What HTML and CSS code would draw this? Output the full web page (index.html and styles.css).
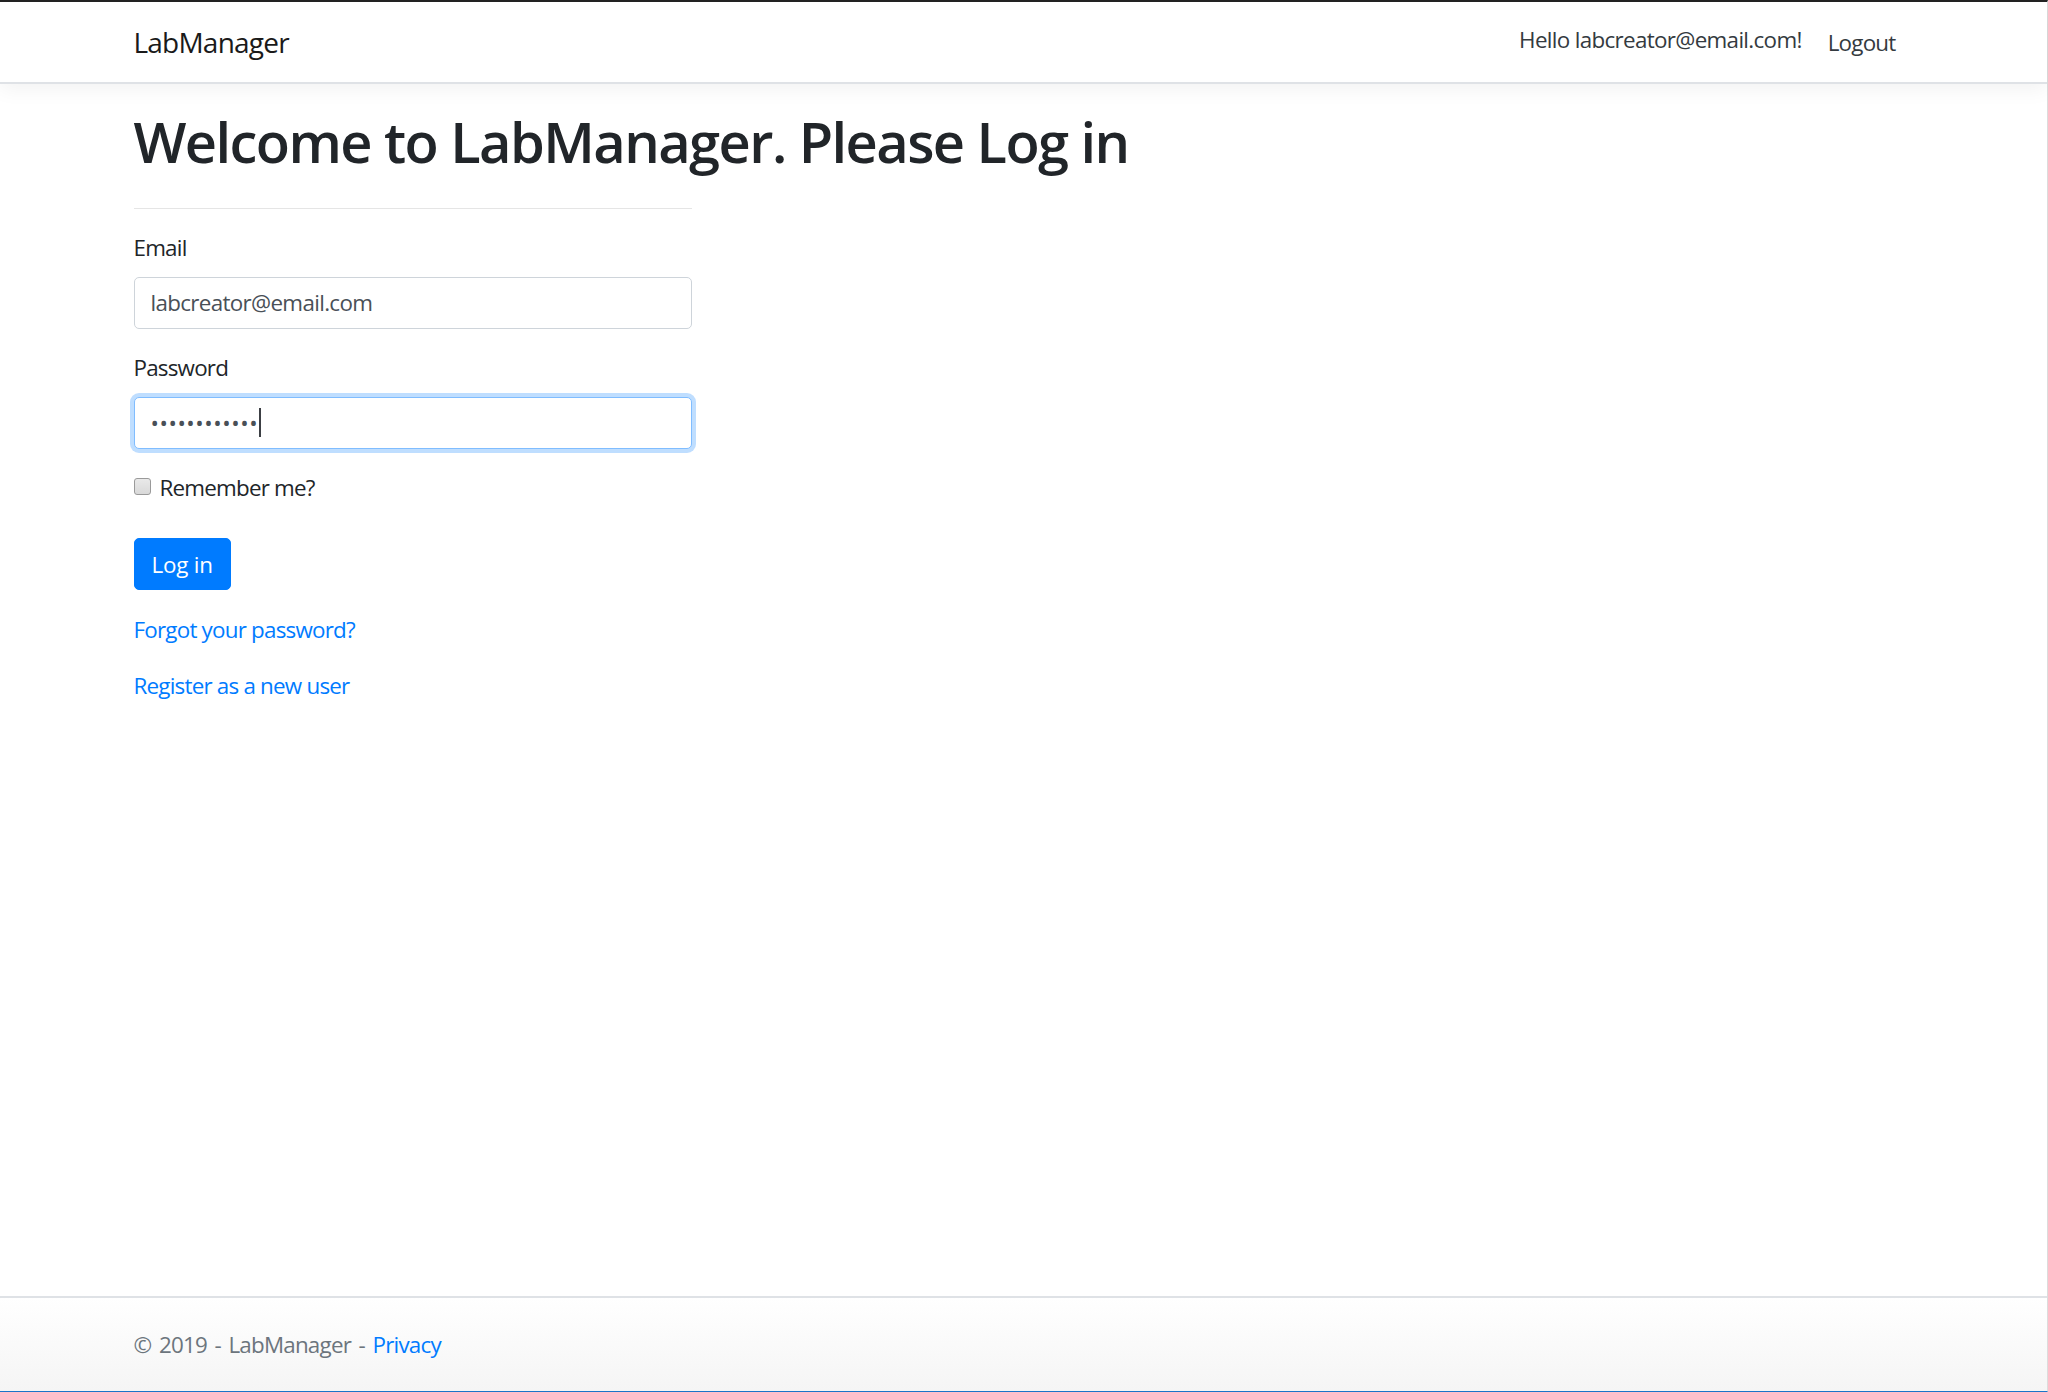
FILE: index.html
```html
<!DOCTYPE html>
<html lang="en">
<head>
<meta charset="utf-8">
<title>Log in - LabManager</title>
<link rel="stylesheet" href="styles.css">
</head>
<body>
<div class="page">
  <header class="navbar">
    <div class="container nav-inner">
      <a class="brand" href="#">LabManager</a>
      <ul class="nav-right">
        <li><a class="nav-link hello" href="#">Hello labcreator@email.com!</a></li>
        <li><button class="nav-link logout" type="button">Logout</button></li>
      </ul>
    </div>
  </header>

  <main class="container main">
    <h1 class="title">Welcome to LabManager. Please Log in</h1>
    <div class="col">
      <section>
        <form class="login-form">
          <hr class="rule">
          <div class="form-group">
            <label class="field-label" for="email">Email</label>
            <input id="email" class="form-control" type="email" value="labcreator@email.com">
          </div>
          <div class="form-group">
            <label class="field-label" for="pw">Password</label>
            <div class="pw-wrap">
              <input id="pw" class="form-control focused" type="password" value="abcdefghijkl">
              <span class="caret"></span>
            </div>
          </div>
          <div class="form-group">
            <div class="checkbox">
              <label class="check-label"><input class="check" type="checkbox"> Remember me?</label>
            </div>
          </div>
          <div class="form-group">
            <button type="button" class="btn-primary">Log in</button>
          </div>
          <div class="links">
            <p class="link-row"><a class="link" href="#">Forgot your password?</a></p>
            <p class="link-row"><a class="link" href="#">Register as a new user</a></p>
          </div>
        </form>
      </section>
    </div>
  </main>

  <footer class="footer">
    <div class="container">&copy; 2019 - LabManager - <a class="link" href="#">Privacy</a></div>
  </footer>
</div>
</body>
</html>
```

FILE: styles.css
```css
* {
  box-sizing: border-box;
}

html, body {
  margin: 0;
  padding: 0;
}

body {
  font-family: "Open Sans", "Noto Sans", "DejaVu Sans", sans-serif;
  font-size: 22.4px;
  line-height: 1.5;
  color: #212529;
  background: #fff;
  letter-spacing: -0.035em;
}

.page {
  min-height: 100vh;
  display: flex;
  flex-direction: column;
  border-top: 2px solid #232323;
  border-right: 1px solid #dcdcdc;
  border-bottom: 1px solid #1b74c8;
}

.container {
  width: 1780px;
  margin: 0 auto;
}

/* ---------- navbar ---------- */
.navbar {
  height: 82px;
  background: #fff;
  border-bottom: 2px solid #dfe2e6;
  box-shadow: 0 6px 19px rgba(0, 0, 0, 0.05);
  position: relative;
  z-index: 1;
}

.nav-inner {
  height: 100%;
  display: flex;
  align-items: center;
  justify-content: space-between;
}

.brand {
  font-size: 28px;
  line-height: 42px;
  color: #1a1a1a;
  text-decoration: none;
}

.nav-right {
  display: flex;
  align-items: center;
  list-style: none;
  margin: 0;
  padding: 0;
}

.nav-link {
  font-family: inherit;
  font-size: 22.4px;
  line-height: 33.6px;
  color: #343a40;
  text-decoration: none;
  letter-spacing: -0.035em;
}

.hello {
  display: block;
  padding: 0 12px;
  margin-bottom: 4px;
  letter-spacing: -0.03em;
}

.logout {
  display: block;
  background: none;
  border: 0;
  padding: 0 18px 0 14px;
  margin-top: 2px;
  cursor: pointer;
}

/* ---------- main ---------- */
.main {
  padding-top: 24px;
}

.title {
  margin: 0;
  font-size: 56px;
  line-height: 67.2px;
  font-weight: 600;
  letter-spacing: -0.028em;
  color: #212529;
}

.col {
  width: 558px;
}

.rule {
  margin: 33px 0 22px;
  height: 0;
  border: 0;
  border-top: 1px solid rgba(0, 0, 0, 0.1);
}

.form-group {
  margin-bottom: 22.4px;
}

.field-label {
  display: inline-block;
  margin-bottom: 12px;
}

.form-control {
  display: block;
  width: 100%;
  height: 52px;
  padding: 8px 16px;
  font-family: inherit;
  font-size: 22.4px;
  line-height: 33.6px;
  letter-spacing: -0.03em;
  color: #495057;
  background: #fff;
  border: 1.6px solid #ced4da;
  border-radius: 5px;
  outline: none;
}

.pw-wrap {
  position: relative;
}

.form-control.focused {
  border-color: #80bdff;
  box-shadow: 0 0 0 4px rgba(0, 123, 255, 0.25);
  caret-color: transparent;
  letter-spacing: 0.55px;
}

.caret {
  position: absolute;
  left: 125px;
  top: 11px;
  width: 2px;
  height: 29px;
  background: #3c3f44;
}

.checkbox {
  padding-bottom: 11.2px;
}

.check-label {
  display: flex;
  align-items: center;
  gap: 9px;
}

.check {
  -webkit-appearance: none;
  appearance: none;
  width: 17px;
  height: 17px;
  margin: 0 0 4px 0;
  border: 1px solid #9a9a9a;
  border-radius: 3px;
  background: linear-gradient(#e9e9e9, #d9d9d9);
}

.btn-primary {
  display: inline-block;
  height: 52px;
  padding: 8px 17px;
  font-family: inherit;
  font-size: 22.4px;
  line-height: 33.6px;
  letter-spacing: -0.01em;
  color: #fff;
  background: #007bff;
  border: 1px solid #007bff;
  border-radius: 5px;
  cursor: pointer;
}

.link-row {
  margin: 0 0 22.4px;
}

.link {
  color: #007bff;
  text-decoration: none;
}

/* ---------- footer ---------- */
.footer {
  margin-top: auto;
  border-top: 2px solid #dfe2e6;
  background: linear-gradient(#fff, #f5f5f5);
  color: #6c757d;
  line-height: 93px;
  white-space: nowrap;
  word-spacing: 2.5px;
}
```
